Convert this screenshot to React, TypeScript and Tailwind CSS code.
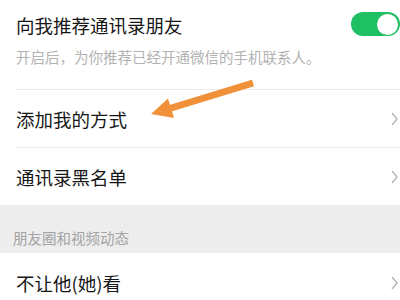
import { ReactNode } from "react";

const Chevron = () => (
  <svg width="7" height="14" viewBox="0 0 7 14" className="shrink-0">
    <polyline points="1,1 6,7 1,13" fill="none" stroke="#b4b4b4" strokeWidth="1.4" />
  </svg>
);

function Row({ children, border, h }: { children: ReactNode; border?: boolean; h: string }) {
  return (
    <div className="pl-4">
      <div
        className={`flex items-center justify-between pr-[2px] ${h} ${
          border ? "border-b border-[#ececec]" : ""
        }`}
      >
        <span className="text-[18.5px] leading-[24px] text-[#161616]">{children}</span>
        <Chevron />
      </div>
    </div>
  );
}

export default function App() {
  return (
    <div className="relative w-[400px] h-[300px] overflow-hidden bg-white font-['Noto_Sans_CJK_SC',sans-serif]">
      {/* recommend toggle */}
      <div className="pl-4">
        <div className="flex h-[90px] border-b border-[#ececec]">
          <div className="flex-1 pt-[13px]">
            <div className="text-[18.5px] leading-[24px] text-[#161616]">向我推荐通讯录朋友</div>
            <div className="mt-[10px] text-[14.5px] leading-[20px] text-[#b2b2b2]">
              开启后，为你推荐已经开通微信的手机联系人。
            </div>
          </div>
          <div className="pt-[12px]">
            <div className="flex h-[24px] w-[49px] items-center justify-end rounded-full bg-[#1fc064] pr-[2px]">
              <div className="h-[21px] w-[21px] rounded-full bg-white" />
            </div>
          </div>
        </div>
      </div>

      <Row border h="h-[58px]">添加我的方式</Row>
      <Row h="h-[57px]">通讯录黑名单</Row>

      {/* section header */}
      <div className="flex h-[48px] items-end bg-[#ededed] pl-[13px] pb-[5px]">
        <span className="text-[14.5px] leading-[20px] text-[#a3a3a3]">朋友圈和视频动态</span>
      </div>

      <Row h="h-[60px]">不让他(她)看</Row>

      {/* annotation arrow */}
      <svg className="pointer-events-none absolute inset-0" width="400" height="300" viewBox="0 0 400 300">
        <line x1="253" y1="83" x2="168" y2="109" stroke="#f0913a" strokeWidth="7" />
        <polygon points="151,114 168,98.5 174,118" fill="#f0913a" />
      </svg>
    </div>
  );
}
